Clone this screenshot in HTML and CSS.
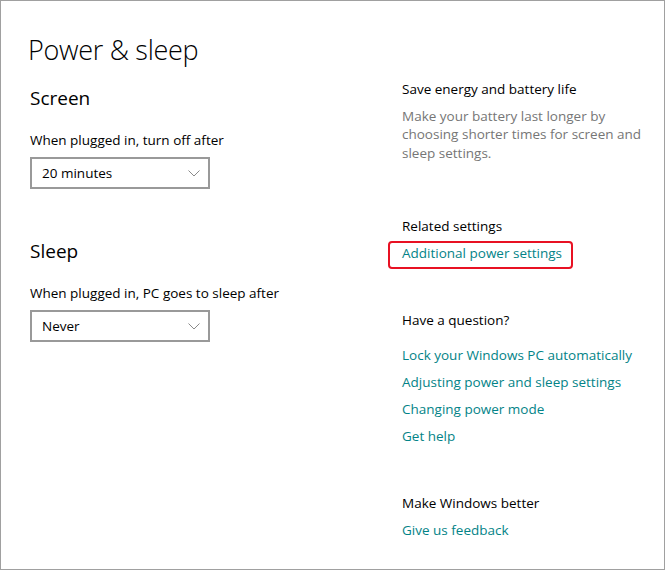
FILE: index.html
```html
<!DOCTYPE html>
<html lang="en">
<head>
<meta charset="utf-8">
<title>Power &amp; sleep</title>
<link rel="stylesheet" href="styles.css">
</head>
<body>
<div class="frame">
  <main class="main">
    <h1 class="title">Power &amp; sleep</h1>

    <h2 class="section section-first">Screen</h2>
    <div class="label">When plugged in, turn off after</div>
    <div class="select">
      <span class="select-value">20 minutes</span>
      <svg class="chevron" width="12" height="7" viewBox="0 0 12 7"><polyline points="0.5,0.5 6,6 11.5,0.5" fill="none" stroke="#8a8a8a" stroke-width="1"/></svg>
    </div>

    <h2 class="section section-sleep">Sleep</h2>
    <div class="label">When plugged in, PC goes to sleep after</div>
    <div class="select">
      <span class="select-value">Never</span>
      <svg class="chevron" width="12" height="7" viewBox="0 0 12 7"><polyline points="0.5,0.5 6,6 11.5,0.5" fill="none" stroke="#8a8a8a" stroke-width="1"/></svg>
    </div>
  </main>

  <aside class="side">
    <div class="side-title">Save energy and battery life</div>
    <p class="side-desc">Make your battery last longer by choosing shorter times for screen and sleep settings.</p>

    <div class="side-title related">Related settings</div>
    <a class="link highlighted" href="#">Additional power settings</a>

    <div class="side-title question">Have a question?</div>
    <ul class="links">
      <li><a class="link" href="#">Lock your Windows PC automatically</a></li>
      <li><a class="link" href="#">Adjusting power and sleep settings</a></li>
      <li><a class="link" href="#">Changing power mode</a></li>
      <li><a class="link" href="#">Get help</a></li>
    </ul>

    <div class="side-title better">Make Windows better</div>
    <a class="link feedback" href="#">Give us feedback</a>
  </aside>
</div>
</body>
</html>
```

FILE: styles.css
```css
* {
  box-sizing: border-box;
}

html, body {
  margin: 0;
  padding: 0;
  background: #ffffff;
}

body {
  font-family: "Open Sans", "Noto Sans", sans-serif;
  font-size: 13.5px;
  line-height: 20px;
  color: #000000;
}

.frame {
  width: 665px;
  height: 570px;
  border: 1px solid #a0a0a0;
  padding: 31px 0 0 27px;
  display: flex;
}

.main {
  width: 374px;
  flex: none;
}

.title {
  margin: 0;
  font-size: 27px;
  font-weight: 300;
  line-height: 36px;
  letter-spacing: -0.3px;
}

.section {
  margin: 0;
  padding-left: 2px;
  font-size: 19px;
  font-weight: 400;
  line-height: 26px;
}

.section-first {
  margin-top: 17px;
}

.section-sleep {
  margin-top: 49px;
}

.label {
  margin-top: 19px;
  padding-left: 2px;
}

.select {
  margin: 7px 0 0 2px;
  width: 180px;
  height: 32px;
  border: 2px solid #999999;
  display: flex;
  align-items: center;
  justify-content: space-between;
  padding: 0 8px 0 10px;
}

.select-value {
  line-height: 28px;
}

.chevron {
  display: block;
  margin-top: 1px;
}

.side {
  flex: 1;
  padding-top: 47px;
  display: flex;
  flex-direction: column;
  align-items: flex-start;
}

.side-title {
  color: #000000;
}

.side-desc {
  margin: 7.5px 0 0;
  width: 245px;
  color: #767676;
  line-height: 18.5px;
}

.related {
  margin-top: 53.5px;
}

.question {
  margin-top: 41px;
}

.better {
  margin-top: 47px;
}

.link {
  color: #038387;
  text-decoration: none;
}

.highlighted {
  margin: 5px 0 0 -14px;
  padding: 0 9px 4px 12px;
  border: 2px solid #e81123;
  border-radius: 4px;
}

.links {
  list-style: none;
  margin: 15px 0 0;
  padding: 0;
  display: flex;
  flex-direction: column;
  gap: 7px;
}

.feedback {
  margin-top: 7px;
}
```
